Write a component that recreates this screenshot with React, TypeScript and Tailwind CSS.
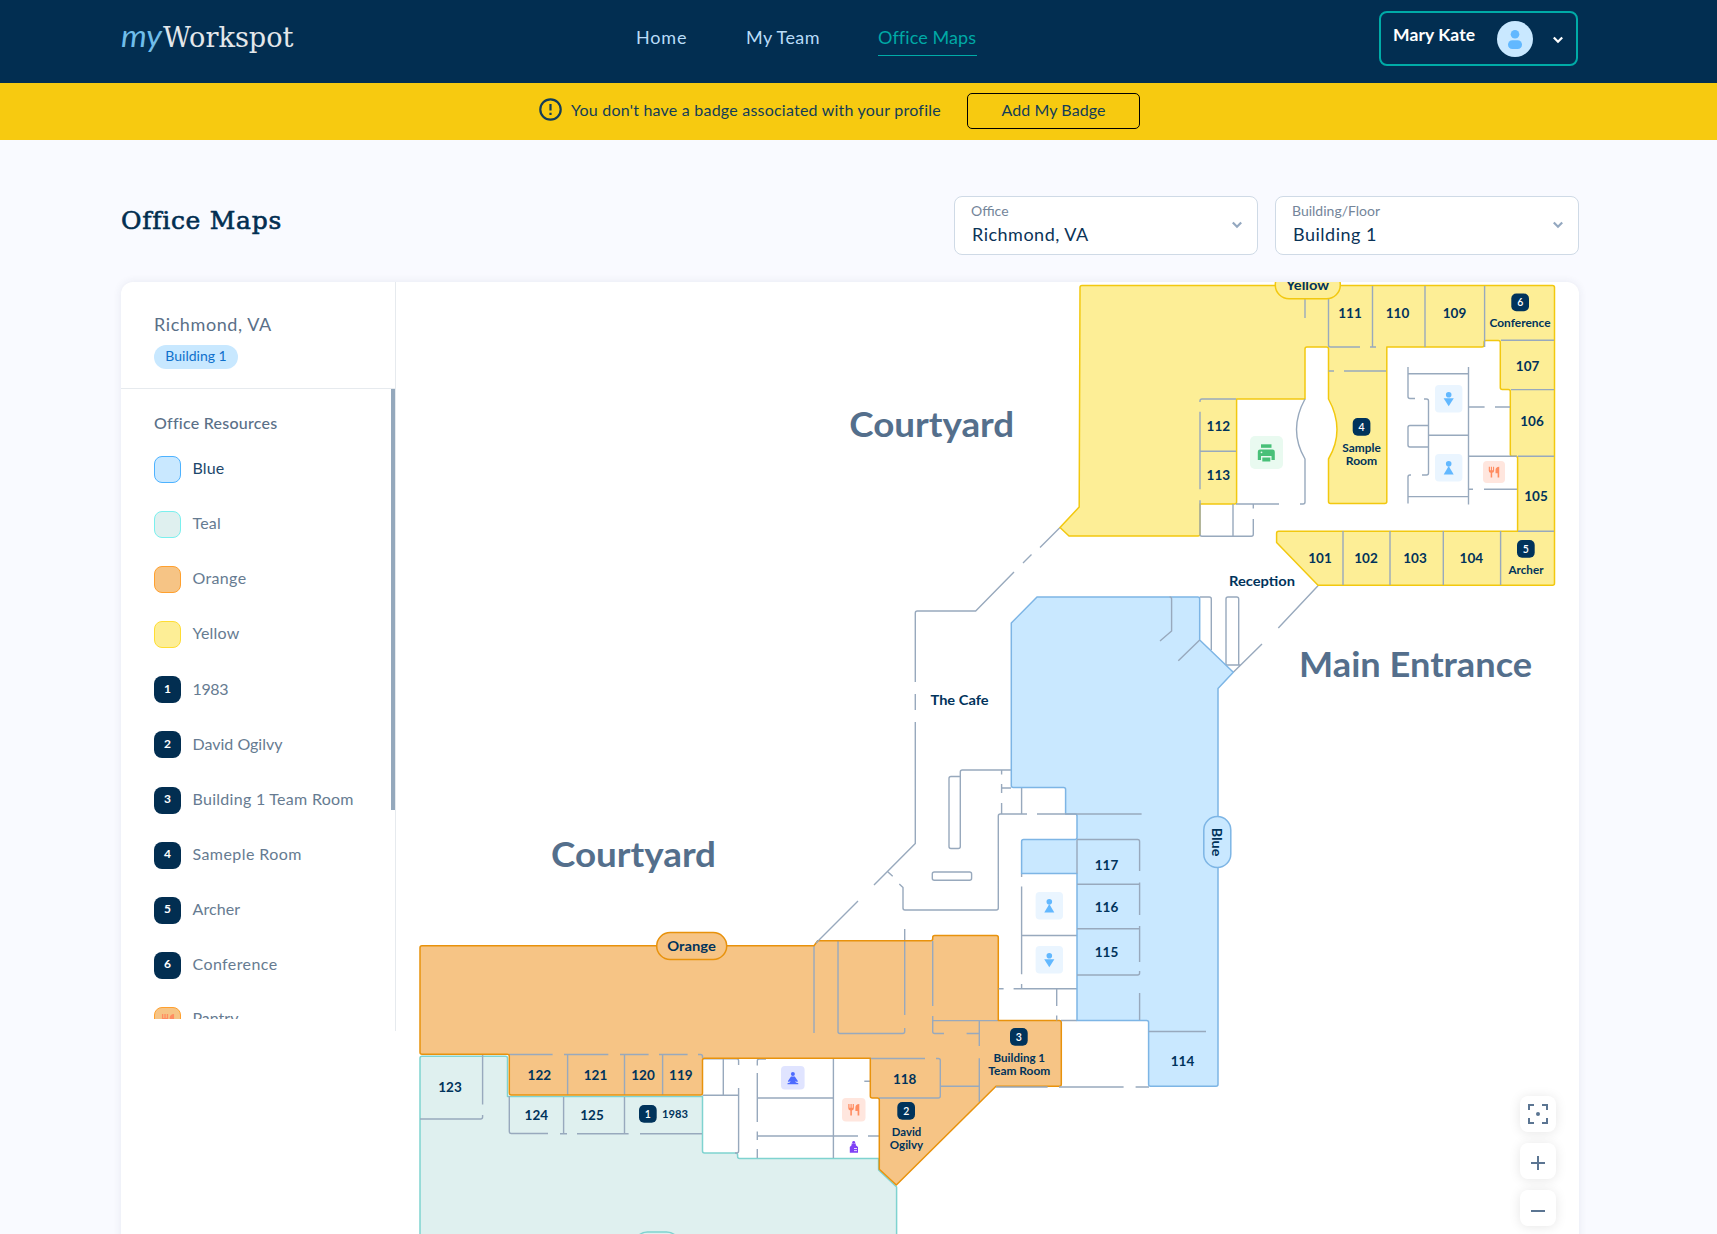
import React from "react";

const NAVY = "#00335b";
const WALL = "#98a9bd";

type Row = { label: string; fill?: string; border?: string; badge?: string; ls: string; active?: boolean; pantry?: boolean };

const rows: Row[] = [
  { label: "Blue", fill: "bg-[#c9e8ff]", border: "border-[#4db2ff]", ls: "tracking-[0.1px]", active: true },
  { label: "Teal", fill: "bg-[#dff0ef]", border: "border-[#7af0ee]", ls: "tracking-[0.2px]" },
  { label: "Orange", fill: "bg-[#f6c485]", border: "border-[#ffa02e]", ls: "tracking-[0.35px]" },
  { label: "Yellow", fill: "bg-[#fdee96]", border: "border-[#ffdd33]", ls: "tracking-[0.2px]" },
  { label: "1983", badge: "1", ls: "tracking-[-0.4px]" },
  { label: "David Ogilvy", badge: "2", ls: "tracking-[0px]" },
  { label: "Building 1 Team Room", badge: "3", ls: "tracking-[0.28px]" },
  { label: "Sameple Room", badge: "4", ls: "tracking-[0.42px]" },
  { label: "Archer", badge: "5", ls: "tracking-[0.1px]" },
  { label: "Conference", badge: "6", ls: "tracking-[0.4px]" },
  { label: "Pantry", fill: "bg-[#f6c485]", border: "border-[#ffa02e]", ls: "tracking-[0px]", pantry: true },
];

function Chevron({ className }: { className: string }) {
  return (
    <svg width="12" height="8" viewBox="0 0 12 8" fill="none" className={className}>
      <path d="M1.8 1.5 L6 5.8 L10.2 1.5" stroke="currentColor" strokeWidth="2.2" />
    </svg>
  );
}

function Select({ label, value, width }: { label: string; value: string; width: string }) {
  return (
    <div className={`flex h-[59px] items-center justify-between rounded-lg border border-[#cfdae6] bg-white pl-[16px] pr-[14px] ${width}`}>
      <div className="-mt-[3px] flex flex-col">
        <span className="text-[14px] leading-[18px] text-[#74859a]">{label}</span>
        <span className="mt-[2px] pl-[1px] text-[18px] leading-[24px] tracking-[0.5px] text-[#0a3357]">{value}</span>
      </div>
      <Chevron className="-mt-[2px] text-[#94a8c0]" />
    </div>
  );
}

function Label({ x, y, w, size = 15, children, fill = NAVY }: { x: number; y: number; w: number; size?: number; children: string; fill?: string }) {
  return (
    <text x={x - w / 2} y={y} textLength={w} lengthAdjust="spacingAndGlyphs" fontSize={size} fontWeight={700} fill={fill}>
      {children}
    </text>
  );
}

function Badge({ x, y, n }: { x: number; y: number; n: string }) {
  return (
    <g>
      <rect x={x} y={y} width="17.7" height="17.7" rx="5" fill={NAVY} />
      <text x={x + 8.9} y={y + 12.5} textAnchor="middle" fontSize="10.5" fontWeight={600} fill="#ffffff">
        {n}
      </text>
    </g>
  );
}

function Fork({ cx, cy, s = 1 }: { cx: number; cy: number; s?: number }) {
  return (
    <g transform={`translate(${cx} ${cy}) scale(${s})`} fill="#ff8c61">
      <path d="M-5.5 -5.5 h1.2 v3.6 h1 v-3.6 h1.2 v3.6 h1 v-3.6 h1.2 v4.2 q0 1.8 -2 2.2 V5.8 h-1.6 V.9 q-2 -.4 -2 -2.2z" />
      <path d="M5.5 -5.5 V5.8 H3.8 V1.4 H1.6 V-2 Q1.6 -5.2 5.5 -5.5z" />
    </g>
  );
}

function Restroom({ x, y, up }: { x: number; y: number; up?: boolean }) {
  return (
    <g>
      <rect x={x} y={y} width="27.4" height="27.4" rx="4" fill="#eaf5ff" />
      <circle cx={x + 13.7} cy={y + 9.7} r="2.8" fill="#62b8ff" />
      <path d={up ? `M${x + 13.7} ${y + 12} l5 8.6 h-10z` : `M${x + 8.6} ${y + 13.2} h10.2 l-5.1 8z`} fill="#62b8ff" />
    </g>
  );
}

const roomLabels: [string, number, number][] = [
  ["111", 1350, 318], ["110", 1397.5, 318], ["109", 1454.5, 318], ["107", 1527.6, 371],
  ["106", 1532, 426], ["105", 1536, 500.6], ["104", 1471.3, 562.6], ["103", 1415, 562.6],
  ["102", 1366, 562.6], ["101", 1320, 562.6], ["112", 1218.3, 431], ["113", 1218.3, 480],
  ["117", 1106.5, 869.3], ["116", 1106.5, 912], ["115", 1106.5, 956.3], ["114", 1182.5, 1065.3],
  ["118", 904.7, 1083.3], ["122", 539.3, 1079.3], ["121", 595.5, 1079.3], ["120", 643, 1079.3],
  ["119", 680.8, 1079.3], ["123", 450, 1091.6], ["124", 536.3, 1119.3], ["125", 592, 1119.3],
];

const yellowWalls =
  "M1305 299V318 M1328.5 286V345q0 2 2 2H1360 M1372.5 286V347 M1370 347H1376 M1425 286V347 M1484.6 286V347" +
  "M1328.5 371H1334 M1344 371H1386 M1501 340.3H1554 M1511 389.6H1554 M1518 456.2H1554 M1518 531.3H1554" +
  "M1343 531V585 M1390 531V585 M1443.3 531V585 M1500.6 531V585" +
  "M1236 399H1202q-2 0 -2 2V402 M1200 411.7V489.3 M1200 500.3V504 M1200 451.2H1236" +
  "M1200 504V534.3q0 2 2 2H1251.3q2 0 2 -2V519 M1253.3 508.5V504 M1233 504V536 M1236 504H1279" +
  "M1300 504H1303q2 0 2 -2V459Q1288 430 1305 399" +
  "M1408 367V396.5q0 2 2 2H1415 M1408 373.8H1468.5 M1424 399H1426.5q2 0 2 2V473q0 2 -2 2H1422" +
  "M1428.5 425.5H1410q-2 0 -2 2V445q0 2 2 2H1428.5 M1428.5 435.3H1468.5 M1411 475H1410q-2 0 -2 2V503.6" +
  "M1408 496.6H1468.5 M1468.5 367V504.6 M1468.5 407H1484.6 M1495 407H1510 M1468.5 456.2H1517 M1468.5 489.3H1473 M1484 489.3H1517";

const cafeWalls =
  "M1060 527.5L1040 547.5 M1031.5 554.5L1023 563 M1014 572L975.7 611H917.3q-2 0 -2 2V682 M915.3 694V710 M915.3 722V843.5L874 885 M858 901L816 943" +
  "M888 872L892.7 876.3 M899.3 884L903 887.5V908q0 2 2 2H996.3q2 0 2 -2V816q0 -2 2 -2H1027" +
  "M934.3 872H969.6q2 0 2 2V878.3q0 2 -2 2H934.3q-2 0 -2 -2V874q0 -2 2 -2z" +
  "M960.3 776.5H951q-2 0 -2 2V846.5q0 2 2 2H958.3q2 0 2 -2V772q0 -2 2 -2H1011" +
  "M1001.6 770V774.5 M1001.6 784V793 M1001.6 803V814 M1001.6 788H1011 M1021.6 788V814" +
  "M1021.6 873V877 M1021.6 886.6V974.3 M1021.6 984V988.6 M1021.6 935.5H1077 M998.6 988.8H1003.6 M1013.6 988.8H1077" +
  "M1056.7 988.8V1006 M1056.7 1015.6V1020.5 M1061 1020.5H1077 M996 1087H1047.6 M1059 1087H1123.6 M1135.6 1087H1149" +
  "M1199.7 597H1209.3q2 0 2 2V650 M1226 665V599q0 -2 2 -2H1236.7q2 0 2 2V665 M1226 665H1241 M1233.3 672.3L1262 644 M1278.3 628L1318 585.8";

const blueWalls =
  "M1169.6 597q2 0 2 2V631L1160 641 M1199.7 640L1178.3 660.7 M1037 814H1141.6" +
  "M1077 839.5H1137.6q2 0 2 2V871 M1077 884.2H1139.6 M1139.6 882.6V915 M1139.6 926V962 M1139.6 971V973q0 2 -2 2H1077 M1077 928.7H1139.6" +
  "M1139.6 993V1020 M1077 840V873.6 M1148.6 1031.5H1206";

const orangeArea =
  "M420 947.7q0 -2 2 -2H814L817.7 940.7H930.7q2 0 2 -2V937.5q0 -2 2 -2H996.3q2 0 2 2V1020.6H1059.3q2 0 2 2V1084.3q0 2 -2 2H996L896.3 1185L879.3 1169.3V1100q0 -2 -2 -2H872.3q-2 0 -2 -2V1058.3H704.5q-2 0 -2 2V1093q0 2 -2 2H511.3q-2 0 -2 -2V1056.3q0 -2 -2 -2H422q-2 0 -2 -2z";

const orangeWalls =
  "M814 946V1033 M838 941V1031.5q0 2 2 2H902.7q2 0 2 -2V1028 M904.7 929V1015" +
  "M932.7 941V1006 M932.7 1016V1031.5q0 2 2 2H944 M966.6 1033.5H979.3 M932.7 1020.6H998 M979.3 1020.6V1046 M979.3 1058.3V1102" +
  "M940.6 1086.2H979 M870 1058.5H925 M936 1058.5H938.3q2 0 2 2V1096q0 2 -2 2H879" +
  "M509 1054.5H552.6 M564 1054.5H608.3 M620 1054.5H648.6 M659 1054.5H687.6 M698 1054.5H700.5q2 0 2 2V1058" +
  "M567.6 1054.5V1095 M624.5 1054.5V1095 M662.6 1054.5V1095";

const tealWalls =
  "M482.6 1055V1104.6 M482.6 1115V1117q0 2 -2 2H420 M509.3 1096V1131.5q0 2 2 2H548 M560 1133.7H567 M577 1133.7H628.6 M640 1133.7H702" +
  "M563.6 1097V1133.5 M624.5 1097V1133.5";

const coreWalls =
  "M723.3 1059V1095 M702.5 1095.3H738.6 M702.5 1058.8H736.6q2 0 2 2V1065 M738.6 1088V1151q0 2 -2 2H735" +
  "M757.3 1065.6V1061q0 -2 2 -2H766 M757.3 1073V1122 M757.3 1131.6V1140 M757.3 1149V1158 M833.4 1059V1158 M757.3 1098H833.4" +
  "M757.3 1136H858 M868 1136H879 M864.3 1081.3H870";

function FloorPlan() {
  return (
    <svg width="1183" height="952" viewBox="396 282 1183 952" className="block" style={{ fontFamily: "Lato, sans-serif" }}>
      <g strokeLinejoin="round" strokeWidth="1.5">
        <path
          d="M420 1058.3q0 -2 2 -2H505.5q2 0 2 2V1096.6H702.5V1151q0 2 2 2H735.6q2 0 2 2V1156.5q0 2 2 2H878.6V1170L896.6 1187V1240H420z"
          fill="#dff0ef" stroke="#7fd3d0"
        />
        <path d={tealWalls + coreWalls} fill="none" stroke={WALL} strokeWidth="1.4" />
        <path d={orangeArea} fill="#f6c485" />
        <path d={orangeWalls} fill="none" stroke={WALL} strokeWidth="1.4" />
        <path d={orangeArea} fill="none" stroke="#e8920c" />
        <path d={cafeWalls} fill="none" stroke={WALL} strokeWidth="1.4" />
        <path
          d="M1037 597L1011.3 623V785.6q0 2 2 2H1063.6q2 0 2 2V814H1075q2 0 2 2V837.5q0 2 -2 2H1023.6q-2 0 -2 2V873.6H1077V1020.4H1146.6q2 0 2 2V1084.3q0 2 2 2H1216q2 0 2 -2V688.6L1233.3 672.3L1199.7 640V599q0 -2 -2 -2z"
          fill="#c9e8ff" stroke="#7db5e5"
        />
        <path d={blueWalls} fill="none" stroke={WALL} strokeWidth="1.4" />
        <path
          d="M1082 285.5H1552.5q2 0 2 2V583.3q0 2 -2 2H1318L1276.6 542.6V533.3q0 -2 2 -2H1517.6V458.3q0 -2 -2 -2H1512.3q-2 0 -2 -2V391.6q0 -2 -2 -2H1502.3q-2 0 -2 -2V342.6q0 -2 -2 -2H1486q-2 0 -2 2V345q0 2 -2 2H1386.8V501.6q0 2 -2 2H1330.5q-2 0 -2 -2V459Q1345.5 430 1328.5 399V349q0 -2 -2 -2H1307q-2 0 -2 2V399H1236.6V502q0 2 -2 2H1200V534q0 2 -2 2H1069L1060 527.5L1079.2 507L1080 287.5q0 -2 2 -2z"
          fill="#fdee96" stroke="#f2c80f"
        />
        <path d={yellowWalls} fill="none" stroke={WALL} strokeWidth="1.4" />
      </g>

      <rect x="1275.3" y="271" width="65" height="27.7" rx="13.8" fill="#fdee96" stroke="#f2c80f" strokeWidth="1.5" />
      <Label x={1307.5} y={290.3} w={43} size={14}>Yellow</Label>
      <rect x="656.7" y="932.5" width="70" height="27" rx="13.5" fill="#f6c485" stroke="#e8920c" strokeWidth="1.5" />
      <Label x={691.6} y={950.8} w={48.5} size={14}>Orange</Label>
      <rect x="1203.8" y="816.5" width="27" height="51" rx="13.5" fill="#c9e8ff" stroke="#7db5e5" strokeWidth="1.5" />
      <g transform="translate(1212.4 842) rotate(90)">
        <Label x={0} y={0} w={28.5} size={14}>Blue</Label>
      </g>
      <rect x="634" y="1232" width="46" height="27" rx="13.5" fill="#dff0ef" stroke="#7fd3d0" strokeWidth="1.5" />

      {roomLabels.map(([t, x, y]) => (
        <Label key={t} x={x} y={y + 0.3} w={23.5} size={14}>{t}</Label>
      ))}

      <Label x={931.7} y={437} w={165} size={34} fill="#546f8c">Courtyard</Label>
      <Label x={633.5} y={866.8} w={165} size={34} fill="#546f8c">Courtyard</Label>
      <Label x={1415.6} y={676.5} w={233} size={34} fill="#546f8c">Main Entrance</Label>
      <Label x={1262} y={586.3} w={66} size={13.5}>Reception</Label>
      <Label x={959.5} y={705} w={58} size={13.5}>The Cafe</Label>

      <Label x={1520} y={327.3} w={61} size={10.6}>Conference</Label>
      <Label x={1526} y={573.6} w={35} size={10.6}>Archer</Label>
      <Label x={1361.5} y={452} w={38.5} size={10.6}>Sample</Label>
      <Label x={1361.5} y={465} w={31.5} size={10.6}>Room</Label>
      <Label x={1019.3} y={1062} w={51.5} size={10.6}>Building 1</Label>
      <Label x={1019.3} y={1075} w={62} size={10.6}>Team Room</Label>
      <Label x={906.5} y={1136} w={29.5} size={10.6}>David</Label>
      <Label x={906.5} y={1149} w={33.5} size={10.6}>Ogilvy</Label>
      <Label x={675} y={1117.5} w={26} size={11}>1983</Label>

      <Badge x={1511.3} y={293.5} n="6" />
      <Badge x={1517} y={540} n="5" />
      <Badge x={1352.7} y={418} n="4" />
      <Badge x={1010} y={1028} n="3" />
      <Badge x={897.3} y={1102} n="2" />
      <Badge x={639} y={1105} n="1" />

      <Restroom x={1435} y={385} />
      <Restroom x={1435} y={454} up />
      <Restroom x={1035.6} y={892} up />
      <Restroom x={1035.6} y={946} />

      <rect x="1483" y="461" width="22" height="22" rx="4" fill="#ffe6de" />
      <Fork cx={1494} cy={472} s={0.95} />
      <rect x="842" y="1098" width="23.5" height="23.5" rx="4" fill="#ffe6de" />
      <Fork cx={853.8} cy={1109.6} />

      <rect x="1250" y="436" width="33" height="33" rx="5" fill="#e9faf0" />
      <g fill="#48c078">
        <rect x="1261" y="444.3" width="10.5" height="3.5" />
        <path d="M1260 449.5H1272.5q2.3 0 2.3 2.3V460H1271.5V456H1261V460H1257.8V451.8q0 -2.3 2.2 -2.3z" />
        <rect x="1262.3" y="457.5" width="8" height="4" />
      </g>
      <circle cx="1261.5" cy="452.3" r="0.9" fill="#e9faf0" />

      <rect x="781" y="1066" width="23.6" height="23.6" rx="4" fill="#e0e4ff" />
      <g fill="#4d6bff">
        <circle cx="792.9" cy="1074" r="2" />
        <path d="M791 1076.5h3.8l3.2 4.8 -1 .8 -1.6 -1.2 .4 1.6 2.5 .8v1H787.5v-1l2.5 -.8 .4 -1.6 -1.6 1.2 -1 -.8z" />
      </g>

      <g fill="#7f41f5">
        <circle cx="853.7" cy="1142.3" r="1.4" />
        <path d="M851.6 1143.6h4.2v1.6l2.2 1.8V1152.8H849.8V1147l1.8 -1.8z" />
      </g>
      <path d="M854 1148.5h3M854 1150.6h3" stroke="#ffffff" strokeWidth="0.8" />
    </svg>
  );
}

function MapButton({ children }: { children: React.ReactNode }) {
  return (
    <div className="flex size-9 items-center justify-center rounded-lg bg-white text-[#5b7592] shadow-[0_1px_12px_rgba(0,0,0,0.10)]">
      {children}
    </div>
  );
}

export default function App() {
  return (
    <div className="h-[1234px] w-[1717px] overflow-hidden bg-[#f9faff] font-['Lato',sans-serif]">
      <header className="flex h-[83px] items-start bg-[#022e51] pl-[121px]">
        <svg width="174" height="40" viewBox="0 0 174 40" className="mt-[20px] shrink-0">
          <text x="0" y="26.6" fontFamily="Lato, sans-serif" fontStyle="italic" fontSize="30" textLength="41" lengthAdjust="spacingAndGlyphs" fill="#6fbdea">my</text>
          <text x="42" y="26.6" fontFamily="'DejaVu Serif', serif" fontSize="27.5" fontWeight="300" textLength="130.5" lengthAdjust="spacingAndGlyphs" fill="#e3e7ea">Workspot</text>
        </svg>
        <nav className="ml-[341px] mt-[23px] flex text-[18px] leading-7 text-[#b9dcf8]">
          <a className="w-[51px] whitespace-nowrap tracking-[0.8px]">Home</a>
          <a className="ml-[59px] w-[74px] whitespace-nowrap tracking-[0.4px]">My Team</a>
          <a className="ml-[58px] h-[33px] w-[99px] whitespace-nowrap border-b border-[#00aba7] tracking-[0.1px] text-[#00a9a5]">Office Maps</a>
        </nav>
        <div className="ml-[402px] mt-[11px] flex h-[55px] w-[199px] items-center rounded-lg border-2 border-[#00aba7] pl-3">
          <span className="-mt-[7px] w-[84px] whitespace-nowrap text-[17.5px] font-bold tracking-[0.1px] text-white">Mary Kate</span>
          <svg width="36" height="36" viewBox="0 0 36 36" className="ml-[20px]">
            <circle cx="18" cy="18" r="18" fill="#c9e8ff" />
            <circle cx="18" cy="13.2" r="4.3" fill="#62b8ff" />
            <rect x="11" y="19.3" width="14" height="8.7" rx="4.3" fill="#62b8ff" />
          </svg>
          <Chevron className="ml-[19px] mt-[3px] text-white" />
        </div>
      </header>

      <div className="flex h-[57px] items-start bg-[#f7ca10] pl-[539px] pt-[10px] text-[16px] text-[#123d58]">
        <svg width="23" height="23" viewBox="0 0 23 23" className="mt-[5px]" fill="none" stroke="#123d58" strokeWidth="2.2">
          <circle cx="11.5" cy="11.5" r="10.2" />
          <path d="M11.5 6v6.5M11.5 14.8v2.2" />
        </svg>
        <span className="ml-[9px] mt-[5px] w-[371px] whitespace-nowrap leading-6 tracking-[0.22px]">You don't have a badge associated with your profile</span>
        <button className="ml-[25px] h-9 w-[173px] rounded-[5px] border border-black pb-0.5 tracking-[0.08px]">Add My Badge</button>
      </div>

      <main className="ml-[121px] w-[1458px]">
        <div className="flex h-[142px] items-start pt-[56px]">
          <h1 className="mt-[9px] flex-1 whitespace-nowrap font-['DejaVu_Serif',serif] text-[25px] leading-8 tracking-[0.72px] text-[#022e51] [-webkit-text-stroke:0.6px_#022e51]">Office Maps</h1>
          <div className="flex gap-[17px]">
            <Select label="Office" value="Richmond, VA" width="w-[304px]" />
            <Select label="Building/Floor" value="Building 1" width="w-[304px]" />
          </div>
        </div>

        <section className="relative flex h-[1000px] overflow-hidden rounded-xl bg-white shadow-[0_0_8px_rgba(40,60,100,0.09)]">
          <aside className="flex h-[749px] w-[275px] shrink-0 flex-col border-r border-[#e6eaee]">
            <div className="h-[107px] border-b border-[#e6eaee] pl-[33px] pt-[30px]">
              <div className="text-[18px] leading-6 tracking-[0.6px] text-[#5a7088]">Richmond, VA</div>
              <div className="mt-[9px] flex h-6 w-[84px] items-center justify-center rounded-full bg-[#c8e8ff] pb-1 text-[14px] text-[#0f70cc]">Building 1</div>
            </div>
            <div className="flex h-[630px] justify-between overflow-hidden">
              <div className="pl-[33px] pt-[22px]">
                <h2 className="whitespace-nowrap text-[16px] font-medium leading-6 tracking-[0.25px] text-[#5a7088]">Office Resources</h2>
                <ul className="mt-[21px] flex flex-col gap-[28.1px]">
                  {rows.map((r) => (
                    <li key={r.label} className="flex h-[27px] shrink-0 items-center gap-[11.5px]">
                      {r.badge ? (
                        <span className="flex size-[27px] items-center justify-center rounded-lg bg-[#022e51] pb-0.5 text-[12px] font-bold text-white">{r.badge}</span>
                      ) : (
                        <span className={`flex size-[27px] items-center justify-center rounded-lg border ${r.fill} ${r.border}`}>
                          {r.pantry && (
                            <svg width="16" height="14" viewBox="-8 -7 16 14">
                              <Fork cx={0} cy={0} s={1.1} />
                            </svg>
                          )}
                        </span>
                      )}
                      <span className={`whitespace-nowrap text-[16px] ${r.badge ? "pb-0.5" : "pb-1"} ${r.ls} ${r.active ? "text-[#1d476b]" : "text-[#667b91]"}`}>{r.label}</span>
                    </li>
                  ))}
                </ul>
              </div>
              <div className="h-[421px] w-1 shrink-0 bg-[#94a8bc]" />
            </div>
          </aside>
          <FloorPlan />
          <div className="absolute right-[23px] top-[814px] flex flex-col gap-[11px]">
            <MapButton>
              <svg width="20" height="20" viewBox="0 0 20 20" fill="none" stroke="currentColor" strokeWidth="2">
                <path d="M1 6V1H6M14 1H19V6M19 14V19H14M6 19H1V14" />
                <circle cx="10" cy="10" r="2" fill="currentColor" stroke="none" />
              </svg>
            </MapButton>
            <MapButton>
              <svg width="14" height="14" viewBox="0 0 14 14" stroke="currentColor" strokeWidth="2" className="mt-[3px]">
                <path d="M0 7H14M7 0V14" />
              </svg>
            </MapButton>
            <MapButton>
              <svg width="14" height="14" viewBox="0 0 14 14" stroke="currentColor" strokeWidth="2" className="mt-[3px]">
                <path d="M0 8H14" />
              </svg>
            </MapButton>
          </div>
        </section>
      </main>
    </div>
  );
}
